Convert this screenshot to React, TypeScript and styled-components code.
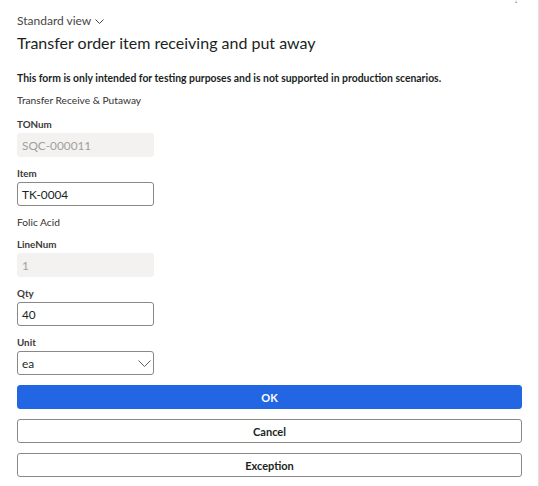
import styled, { createGlobalStyle } from "styled-components";

const GlobalStyle = createGlobalStyle`
  html, body {
    margin: 0;
    padding: 0;
    background: #ffffff;
    font-family: Lato, "Open Sans", sans-serif;
    color: #201f1e;
  }
`;

const Page = styled.div`
  position: relative;
  width: 539px;
  height: 486px;
  box-sizing: border-box;
  border-right: 1px solid #e1dfdd;
  padding: 12px 17px 0 17px;
  display: flex;
  flex-direction: column;
  overflow: hidden;
`;

const HelpMark = styled.span`
  position: absolute;
  top: -9px;
  right: 19px;
  font-size: 12px;
  color: #8a8886;
`;

const ViewPicker = styled.div`
  display: flex;
  align-items: center;
  gap: 4px;
  font-size: 12px;
  line-height: 18px;
  color: #484644;
`;

const Title = styled.h1`
  margin: 1px 0 0 0;
  font-size: 16px;
  line-height: 24px;
  font-weight: 400;
  color: #201f1e;
`;

const Notice = styled.p`
  margin: 15px 0 0 0;
  font-size: 10.4px;
  line-height: 16px;
  font-weight: 700;
  color: #201f1e;
`;

const Caption = styled.div<{ $top: number }>`
  margin-top: ${(p) => p.$top}px;
  font-size: 10.2px;
  line-height: 16px;
  color: #323130;
`;

const Field = styled.div<{ $top?: number }>`
  display: flex;
  flex-direction: column;
  gap: 1px;
  margin-top: ${(p) => p.$top ?? 8}px;
`;

const Label = styled.label`
  font-size: 9.8px;
  line-height: 16px;
  font-weight: 700;
  color: #3b3a39;
`;

const InputBox = styled.div<{ $disabled?: boolean }>`
  width: 137px;
  height: 24px;
  box-sizing: border-box;
  border-radius: 3px;
  border: 1px solid ${(p) => (p.$disabled ? "#f3f2f1" : "#8a8886")};
  background: ${(p) => (p.$disabled ? "#f3f2f1" : "#ffffff")};
  color: ${(p) => (p.$disabled ? "#a19f9d" : "#201f1e")};
  display: flex;
  align-items: center;
  justify-content: space-between;
  padding: 0 2px 0 4px;
  font-size: 11.8px;
`;

const Actions = styled.div`
  display: flex;
  flex-direction: column;
  gap: 10px;
  margin-top: 10px;
`;

const Button = styled.button<{ $primary?: boolean }>`
  width: 505px;
  height: 24px;
  box-sizing: border-box;
  border-radius: 3px;
  border: 1px solid ${(p) => (p.$primary ? "#2266e3" : "#8a8886")};
  background: ${(p) => (p.$primary ? "#2266e3" : "#ffffff")};
  color: ${(p) => (p.$primary ? "#ffffff" : "#201f1e")};
  font-family: inherit;
  font-size: 11px;
  font-weight: 700;
  padding: 0;
`;

const Chevron = ({ w, h, color }: { w: number; h: number; color: string }) => (
  <svg width={w} height={h} viewBox={`0 0 ${w} ${h}`} fill="none">
    <path
      d={`M0.5 0.5 L${w / 2} ${h - 0.5} L${w - 0.5} 0.5`}
      stroke={color}
      strokeWidth="1"
    />
  </svg>
);

export default function App() {
  return (
    <>
      <GlobalStyle />
      <Page>
        <HelpMark>?</HelpMark>
        <ViewPicker>
          Standard view
          <Chevron w={9} h={5} color="#484644" />
        </ViewPicker>
        <Title>Transfer order item receiving and put away</Title>
        <Notice>
          This form is only intended for testing purposes and is not supported in production scenarios.
        </Notice>
        <Caption $top={6}>Transfer Receive &amp; Putaway</Caption>
        <Field>
          <Label>TONum</Label>
          <InputBox $disabled>SQC-000011</InputBox>
        </Field>
        <Field>
          <Label>Item</Label>
          <InputBox>TK-0004</InputBox>
        </Field>
        <Caption $top={8}>Folic Acid</Caption>
        <Field $top={6}>
          <Label>LineNum</Label>
          <InputBox $disabled>1</InputBox>
        </Field>
        <Field>
          <Label>Qty</Label>
          <InputBox>40</InputBox>
        </Field>
        <Field>
          <Label>Unit</Label>
          <InputBox>
            ea
            <Chevron w={13} h={7} color="#605e5c" />
          </InputBox>
        </Field>
        <Actions>
          <Button $primary>OK</Button>
          <Button>Cancel</Button>
          <Button>Exception</Button>
        </Actions>
      </Page>
    </>
  );
}
